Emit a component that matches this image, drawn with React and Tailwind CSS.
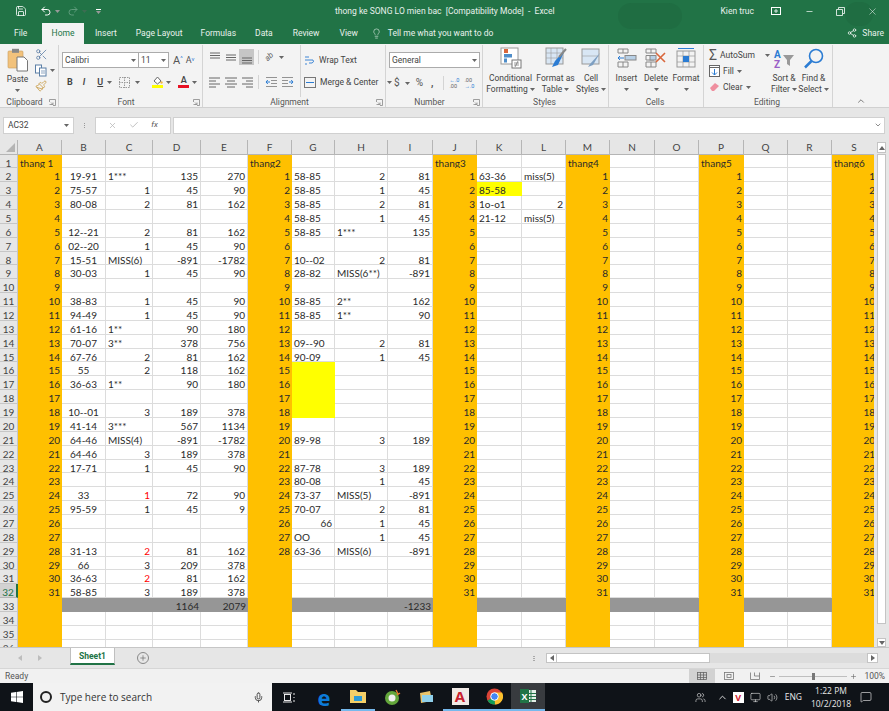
import React from 'react';
import { Undo2, Redo2, Save, Scissors, Paintbrush, ChevronDown, ChevronUp, Lightbulb, Share2, Minus, Plus, X, Check, Mic, Monitor, Volume2, MessageSquare, Users } from 'lucide-react';

const COLS = ['A','B','C','D','E','F','G','H','I','J','K','L','M','N','O','P','Q','R','S'];
const ORANGE = ['A','F','J','M','P','S'];

const jan = [
  ['19-91','1***',135,270],['75-57',1,45,90],['80-08',2,81,162],[],['12--21',2,81,162],['02--20',1,45,90],
  ['15-51','MISS(6)',-891,-1782],['30-03',1,45,90],[],['38-83',1,45,90],['94-49',1,45,90],['61-16','1**',90,180],
  ['70-07','3**',378,756],['67-76',2,81,162],['55',2,118,162],['36-63','1**',90,180],[],['10--01',3,189,378],
  ['41-14','3***',567,1134],['64-46','MISS(4)',-891,-1782],['64-46',3,189,378],['17-71',1,45,90],[],['33',1,72,90],
  ['95-59',1,45,9],[],[],['31-13',2,81,162],['66',3,209,378],['36-63',2,81,162],['58-85',3,189,378],
];
const feb = [
  ['58-85',2,81],['58-85',1,45],['58-85',2,81],['58-85',1,45],['58-85','1***',135],[],['10--02',2,81],['28-82','MISS(6**)',-891],
  [],['58-85','2**',162],['58-85','1**',90],[],['09--90',2,81],['90-09',1,45],[],[],[],[],[],['89-98',3,189],[],
  ['87-78',3,189],['80-08',1,45],['73-37','MISS(5)',-891],['70-07',2,81],[66,1,45],['OO',1,45],['63-36','MISS(6)',-891],
];
const mar = [['63-36','miss(5)'],['85-58'],['1o-o1',2],['21-12','miss(5)']];

const sheet = {};
const put = (col, row, v) => { if (v !== undefined) sheet[col + row] = v; };
jan.forEach((r, i) => r.forEach((v, k) => put(['B','C','D','E'][k], i + 2, v)));
feb.forEach((r, i) => r.forEach((v, k) => put(['G','H','I'][k], i + 2, v)));
mar.forEach((r, i) => r.forEach((v, k) => put(['K','L'][k], i + 2, v)));
['A','F','J','M','P','S'].forEach((c) => {
  const last = c === 'F' ? 28 : 31;
  for (let n = 1; n <= last; n++) put(c, n + 1, n);
});
put('A', 1, 'thang 1'); put('F', 1, 'thang2'); put('J', 1, 'thang3'); put('M', 1, 'thang4'); put('P', 1, 'thang5'); put('S', 1, 'thang6');
put('D', 33, 1164); put('E', 33, 2079); put('I', 33, -1233);

const RED = ['C25', 'C29', 'C31'];
const YELLOW = ['G16', 'G17', 'G18', 'G19', 'K3'];

function Cell({ col, row }) {
  const id = col + row;
  const v = sheet[id];
  const isNum = typeof v === 'number';
  const align = col === 'B' ? 'text-center' : isNum ? 'text-right' : 'text-left';
  let bg = 'bg-white border-r border-b border-[#dcdcdc]';
  if (YELLOW.includes(id)) bg = 'bg-[#ffff00]';
  else if (ORANGE.includes(col)) bg = 'bg-[#ffc000]';
  else if (row === 33) bg = 'bg-[#969696]';
  const color = RED.includes(id) ? 'text-[#ff0000]' : 'text-[#2a2a2a]';
  return <div className={`${bg} ${align} ${color} overflow-visible whitespace-nowrap px-[2px] pt-[1px] text-[10px] leading-[14px]`}>{v}</div>;
}

function Sheet() {
  const rows = Array.from({ length: 36 }, (_, i) => i + 1);
  return (
    <div className="grid min-w-0 flex-1 grid-cols-[18px_44px_44px_47px_48px_47px_44px_43px_53px_45px_44px_45px_44px_44px_45px_44px_45px_44px_44px_45px] grid-rows-[14.6px] auto-rows-[13.87px] overflow-hidden font-['Lato',sans-serif]">
      <div className="flex items-end justify-end border-r border-b border-[#b5b5b5] bg-[#e6e6e6] p-[2px]">
        <svg width="9" height="9" viewBox="0 0 9 9"><path d="M9 0V9H0Z" fill="#b4b4b4" /></svg>
      </div>
      {COLS.map((c) => (
        <div key={c} className="border-r border-b border-[#b5b5b5] bg-[#e6e6e6] text-center text-[10px] leading-[14px] text-[#444444]">{c}</div>
      ))}
      {rows.map((r) => (
        <React.Fragment key={r}>
          {r === 32 ? (
            <div className="border-r-2 border-b border-[#217346] border-b-[#b5b5b5] bg-[#d2d2d2] pt-[1px] text-center text-[10px] leading-[14px] text-[#217346]">{r}</div>
          ) : (
            <div className="border-r border-b border-[#c6c6c6] bg-[#e6e6e6] pt-[1px] text-center text-[10px] leading-[14px] text-[#444444]">{r}</div>
          )}
          {COLS.map((c) => <Cell key={c} col={c} row={r} />)}
        </React.Fragment>
      ))}
    </div>
  );
}

function VScroll() {
  return (
    <div className="flex w-[15px] flex-none flex-col bg-[#e6e6e6] pl-[3px] pr-[3px] pt-[2px]">
      <div className="flex h-[11px] flex-none items-center justify-center border border-[#c4c4c4] bg-white">
        <svg width="6" height="4" viewBox="0 0 6 4"><path d="M0 4L3 0L6 4Z" fill="#666" /></svg>
      </div>
      <div className="mt-px h-[470px] flex-none border border-[#c4c4c4] bg-white" />
      <div className="flex-1" />
      <div className="flex h-[9px] flex-none items-center justify-center border border-[#c4c4c4] bg-white">
        <svg width="6" height="4" viewBox="0 0 6 4"><path d="M0 0L3 4L6 0Z" fill="#666" /></svg>
      </div>
    </div>
  );
}

function Caret({ className = '' }) {
  return <svg className={`inline-block flex-none ${className}`} width="5" height="3" viewBox="0 0 5 3"><path d="M0 0H5L2.5 3Z" fill="#666" /></svg>;
}

function Launcher() {
  return (
    <svg className="flex-none" width="7" height="7" viewBox="0 0 7 7" fill="none" stroke="#888"><path d="M.5 3V.5H6.5V6.5H4M.5 5.5H2.5M2 3.5L4 5.5M4 3.5V5.5H2" strokeWidth=".8" /></svg>
  );
}

function Group({ w, label, launcher, children }) {
  return (
    <div className={`${w} flex h-full flex-none flex-col border-r border-[#d4d4d4]`}>
      <div className="flex min-h-0 flex-1">{children}</div>
      <div className="flex h-[10px] flex-none items-center justify-center pr-[2px] text-[8.5px] text-[#555555]">
        <span className="flex-1 text-center">{label}</span>
        {launcher && <Launcher />}
      </div>
    </div>
  );
}

function BigBtn({ w, icon, lines }) {
  return (
    <div className={`${w} flex flex-none flex-col items-center pt-[1px] text-[8.5px] leading-[11px] text-[#444444]`}>
      <div className="flex h-[24px] flex-none items-center justify-center">{icon}</div>
      <div className="mt-[3px] whitespace-nowrap">{lines[0]}</div>
      <div className="flex h-[11px] items-center gap-[2px] whitespace-nowrap">{lines[1]}<Caret /></div>
    </div>
  );
}

function IconPaste() {
  return (
    <svg className="flex-none" width="22" height="24" viewBox="0 0 22 24">
      <rect x="1" y="3" width="15" height="17" rx="1" fill="#f2c27c" stroke="#c79c5c" strokeWidth=".6" />
      <rect x="5" y="0.8" width="7" height="4" fill="#888" />
      <path d="M10 9H17L20.5 12.5V23H10Z" fill="#fff" stroke="#777" />
    </svg>
  );
}

function AlignLines({ kind }) {
  const paths = {
    left: 'M1 3H12M1 6H8M1 9H12M1 12H8',
    center: 'M1 3H13M3 6H11M1 9H13M3 12H11',
    right: 'M2 3H13M6 6H13M2 9H13M6 12H13',
    top: 'M2 3H12M2 5.5H12M2 8H12',
    middle: 'M2 5H12M2 7.5H12M2 10H12',
    bottom: 'M2 8H12M2 10.5H12M2 13H12',
  };
  return <svg width="14" height="15" viewBox="0 0 14 15" fill="none" stroke="#666" strokeWidth="1"><path d={paths[kind]} /></svg>;
}

function IndentIcon({ flip }) {
  return (
    <svg className={flip ? '-scale-x-100' : ''} width="13" height="13" viewBox="0 0 13 13" fill="none" stroke="#888">
      <path d="M1 1.5H12M6 4.5H12M6 7.5H12M1 10.5H12" strokeWidth=".9" />
      <path d="M5 6H1M2.8 4L1 6L2.8 8" stroke="#2b7cd3" />
    </svg>
  );
}

function Ribbon() {
  return (
    <div className="flex h-[64px] flex-none border-b border-[#d0d0d0] bg-[#f3f3f3] pt-[1px] font-['Roboto',sans-serif]">
      <Group w="w-[59px]" label="Clipboard" launcher>
        <div className="flex w-[35px] flex-none flex-col items-center pt-[3px] text-[8.5px] leading-[11px] text-[#444444]">
          <IconPaste />
          <div className="mt-[2px]">Paste</div>
          <Caret className="mt-[4px]" />
        </div>
        <div className="flex flex-col gap-[3px] pt-[3px]">
          <Scissors size={13} strokeWidth={1.3} className="text-[#4a6f9c]" />
          <div className="flex items-center gap-[3px]">
            <svg width="12" height="13" viewBox="0 0 12 13" fill="none" stroke="#5b7fa6"><rect x=".5" y="1" width="6" height="8" fill="#fff" /><rect x="4.5" y="4" width="6.5" height="8" fill="#fff" /><path d="M6 7H10M6 9H10" strokeWidth=".7" /></svg>
            <Caret />
          </div>
          <Paintbrush size={12} strokeWidth={1.4} className="text-[#c28f2e]" />
        </div>
      </Group>

      <Group w="w-[144px]" label="Font" launcher>
        <div className="flex flex-col gap-[8px] pl-[3px] pt-[7px]">
          <div className="flex items-center">
            <div className="flex h-[16px] w-[77px] items-center justify-between border border-[#ababab] bg-white px-[2px] text-[8.5px] text-[#444444]">Calibri<Caret /></div>
            <div className="flex h-[16px] w-[30px] items-center justify-between border border-l-0 border-[#ababab] bg-white px-[2px] text-[8.5px] text-[#444444]">11<Caret /></div>
            <div className="ml-[4px] text-[11px] leading-none text-[#555555]">A<span className="align-top text-[6px] text-[#2b7cd3]">^</span></div>
            <div className="ml-[3px] text-[9px] leading-none text-[#555555]">A<span className="align-top text-[6px] text-[#2b7cd3]">v</span></div>
          </div>
          <div className="flex items-center text-[9px] leading-none text-[#444444]">
            <span className="ml-[5px] font-bold">B</span>
            <span className="ml-[10px] italic font-semibold">I</span>
            <span className="ml-[12px] font-semibold underline">U</span>
            <Caret className="ml-[4px]" />
            <svg className="ml-[7px]" width="11" height="11" viewBox="0 0 11 11" fill="none" stroke="#999" strokeDasharray="1.5 1"><rect x=".5" y=".5" width="10" height="10" /><path d="M5.5 0V11M0 5.5H11" /></svg>
            <Caret className="ml-[5px]" />
            <div className="ml-[12px] flex w-[11px] flex-col items-center">
              <svg width="11" height="9" viewBox="0 0 11 9"><path d="M2 5L5.5 1L9 5L5.5 8Z" fill="#fff" stroke="#666" /><circle cx="9.5" cy="6.5" r="1.2" fill="#f1b64f" /></svg>
              <div className="h-[3px] w-[11px] bg-[#ffff00]" />
            </div>
            <Caret className="ml-[3px]" />
            <div className="ml-[7px] flex w-[11px] flex-col items-center">
              <span className="text-[9px] font-semibold leading-[9px]">A</span>
              <div className="h-[3px] w-[11px] bg-[#e81123]" />
            </div>
            <Caret className="ml-[3px]" />
          </div>
        </div>
      </Group>

      <Group w="w-[183px]" label="Alignment" launcher>
        <div className="flex flex-col gap-[9px] pl-[4px] pt-[4px]">
          <div className="flex items-center gap-[1px]">
            <div className="flex h-[16px] w-[15px] items-center justify-center"><AlignLines kind="top" /></div>
            <div className="flex h-[16px] w-[15px] items-center justify-center"><AlignLines kind="middle" /></div>
            <div className="flex h-[16px] w-[15px] items-center justify-center bg-[#c6c6c6]"><AlignLines kind="bottom" /></div>
            <div className="ml-[3px] h-[14px] border-l border-[#d4d4d4]" />
            <div className="ml-[5px] -rotate-45 text-[8px] italic leading-none text-[#666666]">ab</div>
            <Caret className="ml-[4px]" />
          </div>
          <div className="flex items-center gap-[1px]">
            <div className="flex h-[16px] w-[15px] items-center justify-center"><AlignLines kind="left" /></div>
            <div className="flex h-[16px] w-[15px] items-center justify-center"><AlignLines kind="center" /></div>
            <div className="flex h-[16px] w-[15px] items-center justify-center"><AlignLines kind="right" /></div>
            <div className="ml-[3px] h-[14px] border-l border-[#d4d4d4]" />
            <div className="ml-[4px] flex h-[16px] w-[15px] items-center justify-center"><IndentIcon /></div>
            <div className="flex h-[16px] w-[15px] items-center justify-center"><IndentIcon flip /></div>
          </div>
        </div>
        <div className="ml-[5px] flex flex-col gap-[7px] border-l border-[#d4d4d4] pl-[3px] pt-[8px] text-[8.5px] leading-[15px] text-[#444444]">
          <div className="flex items-center gap-[4px] whitespace-nowrap">
            <svg width="11" height="13" viewBox="0 0 11 13" fill="none" stroke="#2b7cd3" strokeWidth=".9"><path d="M1 3H5M1 6H9Q10.5 8 8 9H5M1 10H3" /></svg>
            Wrap Text
          </div>
          <div className="flex items-center gap-[4px] whitespace-nowrap">
            <svg className="flex-none" width="12" height="11" viewBox="0 0 12 11" fill="none" stroke="#777"><rect x=".5" y=".5" width="11" height="10" /><path d="M2 5.5H10" stroke="#2b7cd3" /></svg>
            Merge &amp; Center
            <Caret className="ml-[5px]" />
          </div>
        </div>
      </Group>

      <Group w="w-[97px]" label="Number" launcher>
        <div className="flex flex-col gap-[8px] pl-[3px] pt-[7px]">
          <div className="flex h-[16px] w-[91px] items-center justify-between border border-[#ababab] bg-white px-[2px] text-[8.5px] text-[#444444]">General<Caret /></div>
          <div className="flex items-center whitespace-nowrap text-[10px] leading-none text-[#555555]">
            <span className="ml-[5px]">$</span>
            <Caret className="ml-[5px]" />
            <span className="ml-[6px]">%</span>
            <span className="ml-[8px] font-bold">,</span>
            <div className="ml-[10px] h-[14px] border-l border-[#d4d4d4]" />
            <span className="ml-[5px] w-[11px] text-[5.5px] leading-[6px] text-[#2b7cd3]">←.0<br /><span className="text-[#666666]">.00</span></span>
            <span className="ml-[4px] w-[11px] text-[5.5px] leading-[6px] text-[#666666]">.00<br /><span className="text-[#2b7cd3]">→.0</span></span>
          </div>
        </div>
      </Group>

      <Group w="w-[126px]" label="Styles">
        <div className="w-[3px] flex-none" />
        <BigBtn w="w-[49px]" lines={['Conditional', 'Formatting']} icon={
          <svg width="22" height="22" viewBox="0 0 22 22"><rect x="1" y="1" width="17" height="16" fill="#fff" stroke="#9a9a9a" /><rect x="4" y="2" width="4" height="4" fill="#d9663b" /><rect x="4" y="7" width="8" height="3.5" fill="#4f8dc9" /><rect x="4" y="11.5" width="3" height="4" fill="#4f8dc9" /><rect x="12" y="13" width="9" height="8" fill="#fff" stroke="#777" /><path d="M14 16H19M14 18H19M15 20L18 14" stroke="#555" strokeWidth=".6" /></svg>
        } />
        <BigBtn w="w-[41px]" lines={['Format as', 'Table']} icon={
          <svg width="22" height="22" viewBox="0 0 22 22"><rect x="1" y="1" width="17" height="16" fill="#d8e6f4" stroke="#9a9a9a" /><path d="M1 6H18M1 11H18M6 1V17M12 1V17" stroke="#9a9a9a" strokeWidth=".6" /><path d="M20 3L10 14L7 20L13 18Z" fill="#2b7cd3" /><path d="M21 2L14 10" stroke="#888" strokeWidth="2" /></svg>
        } />
        <BigBtn w="w-[30px]" lines={['Cell', 'Styles']} icon={
          <svg width="20" height="20" viewBox="0 0 20 20"><rect x="1" y="1" width="17" height="15" fill="#d8e6f4" stroke="#9a9a9a" /><path d="M1 8H18" stroke="#9a9a9a" strokeWidth=".6" /><path d="M19 5L9 16L7 19L12 17Z" fill="#7d9fc2" /></svg>
        } />
      </Group>

      <Group w="w-[95px]" label="Cells">
        <div className="w-[3px] flex-none" />
        <BigBtn w="w-[29px]" lines={['Insert', '']} icon={
          <svg width="20" height="20" viewBox="0 0 20 20" fill="none" stroke="#888"><path d="M1 1H11V5H1ZM1 14H11V19H1ZM6 1V5M6 14V19" /><rect x="8" y="7.5" width="11" height="4.5" fill="#b8d0e6" /><path d="M7 10H1M3 8L1 10L3 12" stroke="#2b7cd3" /></svg>
        } />
        <BigBtn w="w-[30px]" lines={['Delete', '']} icon={
          <svg width="22" height="20" viewBox="0 0 22 20" fill="none" stroke="#888"><path d="M1 1H11V5H1ZM1 14H11V19H1ZM6 1V5M6 14V19M1 7.5H9V12H1Z" /><rect x="5" y="7.5" width="6" height="4.5" fill="#b8d0e6" /><path d="M11 5L20 14M20 5L11 14" stroke="#d9663b" strokeWidth="1.6" /></svg>
        } />
        <BigBtn w="w-[30px]" lines={['Format', '']} icon={
          <svg width="20" height="22" viewBox="0 0 20 22" fill="none" stroke="#999"><rect x="1" y="4" width="18" height="16" /><path d="M7 4V20M13 4V20M1 9H19M1 15H19" strokeWidth=".7" /><rect x="7" y="9" width="6" height="6" fill="#2b7cd3" stroke="none" /><path d="M2 1.5H18" stroke="#2b7cd3" /></svg>
        } />
      </Group>

      <Group w="w-[129px]" label="Editing">
        <div className="flex w-[65px] flex-none flex-col pl-[5px] pt-[2px] text-[8.5px] leading-[16px] text-[#444444]">
          <div className="flex items-center gap-[3px]"><span className="w-[11px] text-center text-[14px] leading-[16px] text-[#555555]">Σ</span>AutoSum<Caret className="ml-[7px]" /></div>
          <div className="flex items-center gap-[3px]">
            <svg width="11" height="12" viewBox="0 0 11 12" fill="none" stroke="#666"><rect x=".5" y=".5" width="10" height="11" fill="#fff" /><path d="M.5 2.5H10.5" /><path d="M5.5 4V10M3 7.5L5.5 10L8 7.5" stroke="#2b7cd3" /></svg>
            Fill<Caret />
          </div>
          <div className="flex items-center gap-[3px]">
            <svg width="11" height="10" viewBox="0 0 11 10"><path d="M1 6L6 1L10 4L5 9H3Z" fill="#ef8f9f" /></svg>
            Clear<Caret />
          </div>
        </div>
        <div className="flex w-[30px] flex-none flex-col items-center text-[8.5px] leading-[11px] text-[#444444]">
          <svg className="mb-[4px] mt-[4px] flex-none" width="22" height="20" viewBox="0 0 22 20"><text x="1" y="9" fontSize="10" fontWeight="700" fill="#2b7cd3">A</text><text x="1" y="19" fontSize="10" fontWeight="700" fill="#9a5fc6">Z</text><path d="M10 6H21L17 11V17L14 15V11Z" fill="#999" /></svg>
          <div>Sort &amp;</div>
          <div className="flex items-center gap-[2px]">Filter<Caret /></div>
        </div>
        <div className="flex w-[29px] flex-none flex-col items-center text-[8.5px] leading-[11px] text-[#444444]">
          <svg className="mb-[4px] mt-[3px] flex-none" width="21" height="21" viewBox="0 0 21 21" fill="none" stroke="#2b7cd3"><circle cx="13" cy="8" r="6.5" strokeWidth="1.6" /><path d="M8.5 13L2 19.5" strokeWidth="2.5" /></svg>
          <div>Find &amp;</div>
          <div className="flex items-center gap-[2px]">Select<Caret /></div>
        </div>
      </Group>

      <div className="flex flex-1 items-end justify-center pb-[1px]">
        <ChevronUp size={10} className="text-[#666666]" />
      </div>
    </div>
  );
}

function TitleBar() {
  return (
    <div className="relative flex h-[22px] flex-none items-center bg-[#217346] text-white font-['Roboto',sans-serif]">
      <div className="absolute left-[618px] top-[3px] h-[26px] w-[64px] rounded-full bg-[#1f6d42]" />
      <div className="absolute left-[845px] top-[2px] h-[24px] w-[28px] rounded-full bg-[#1f6d42]" />
      <div className="flex w-[335px] flex-none items-center pl-[15px]">
        <Save size={12} strokeWidth={1.6} />
        <Undo2 size={12} className="ml-[13px]" />
        <Caret className="ml-[3px] invert" />
        <Redo2 size={12} className="ml-[7px] text-[#5f9c7c]" />
        <Caret className="ml-[3px] opacity-40" />
        <div className="ml-[9px] flex flex-col items-center gap-[1px]">
          <div className="h-px w-[5px] bg-white" />
          <Caret className="invert" />
        </div>
      </div>
      <div className="relative text-[8.5px] whitespace-nowrap text-[#e8f1ec]">thong ke SONG LO mien bac&nbsp; [Compatibility Mode]&nbsp; -&nbsp; Excel</div>
      <div className="relative ml-auto flex items-center pr-[11px] text-[#e8f1ec]">
        <span className="mr-[17px] text-[8.5px]">Kien truc</span>
        <svg className="mr-[24px]" width="10" height="8" viewBox="0 0 10 8" fill="none" stroke="#fff"><rect x=".5" y=".5" width="9" height="7" /><path d="M5 2V6M3 4H7" strokeWidth=".8" /></svg>
        <Minus size={9} className="mr-[22px]" />
        <svg className="mr-[22px]" width="9" height="9" viewBox="0 0 9 9" fill="none" stroke="#fff"><path d="M2.5 2V.5H8.5V6.5H7M.5 2.5H6.5V8.5H.5Z" strokeWidth=".8" /></svg>
        <X size={11} strokeWidth={1.2} />
      </div>
    </div>
  );
}

function TabRow() {
  const item = 'text-[8.5px] text-[#e8f1ec] whitespace-nowrap';
  return (
    <div className="flex h-[22px] flex-none items-center bg-[#217346] font-['Roboto',sans-serif]">
      <span className={`${item} ml-[14px] w-[12px]`}>File</span>
      <div className="ml-[16px] flex h-[21px] w-[42px] items-center justify-center self-end bg-[#f3f3f3] text-[8.5px] text-[#217346]">Home</div>
      <span className={`${item} ml-[11px]`}>Insert</span>
      <span className={`${item} ml-[19px]`}>Page Layout</span>
      <span className={`${item} ml-[18px]`}>Formulas</span>
      <span className={`${item} ml-[19px]`}>Data</span>
      <span className={`${item} ml-[20px]`}>Review</span>
      <span className={`${item} ml-[20px]`}>View</span>
      <Lightbulb size={11} strokeWidth={1.3} className="ml-[13px] text-[#e8f1ec]" />
      <span className={`${item} ml-[6px]`}>Tell me what you want to do</span>
      <div className="ml-auto flex items-center gap-[5px] pr-[5px] text-[8.5px] text-[#e8f1ec]">
        <Share2 size={10} />
        Share
      </div>
    </div>
  );
}

function FormulaBar() {
  return (
    <div className="flex h-[32px] flex-none items-center bg-[#e6e6e6] pl-[3px] pr-[4px] pb-[6px] pt-[8px] font-['Roboto',sans-serif]">
      <div className="flex h-[17px] w-[71px] flex-none items-center justify-between border border-[#d0d0d0] bg-white px-[4px] text-[8.5px] text-[#444444]">AC32<Caret /></div>
      <div className="flex w-[21px] flex-none flex-col items-center gap-[1px]">
        <div className="h-px w-px bg-[#999999]" /><div className="h-px w-px bg-[#999999]" /><div className="h-px w-px bg-[#999999]" />
      </div>
      <div className="flex h-[17px] w-[76px] flex-none items-center justify-around border border-[#d0d0d0] bg-white px-[6px]">
        <X size={9} className="text-[#b5b5b5]" />
        <Check size={10} className="text-[#b5b5b5]" />
        <span className="text-[8px] italic text-[#555555]">fx</span>
      </div>
      <div className="ml-[2px] flex h-[17px] flex-1 items-center justify-end border border-[#d0d0d0] bg-white pr-[2px]">
        <ChevronDown size={8} className="text-[#555555]" />
      </div>
    </div>
  );
}

function SheetTabs() {
  return (
    <div className="flex h-[20px] flex-none items-center bg-[#e6e6e6] font-['Roboto',sans-serif]">
      <svg className="ml-[18px]" width="4" height="6" viewBox="0 0 4 6"><path d="M4 0L0 3L4 6Z" fill="#bdbdbd" /></svg>
      <svg className="ml-[16px]" width="4" height="6" viewBox="0 0 4 6"><path d="M0 0L4 3L0 6Z" fill="#bdbdbd" /></svg>
      <div className="ml-[28px] flex h-[17px] w-[45px] items-start justify-center self-start border-x border-b-2 border-[#bfbfbf] border-b-[#217346] bg-white text-[8.5px] font-bold leading-[16px] text-[#217346]">Sheet1</div>
      <div className="ml-[22px] flex h-[12px] w-[12px] items-center justify-center rounded-full border border-[#888888]">
        <Plus size={8} className="text-[#666666]" />
      </div>
      <div className="ml-[384px] flex flex-col gap-[1px]">
        <div className="h-px w-[2px] bg-[#a8a8a8]" /><div className="h-px w-[2px] bg-[#a8a8a8]" /><div className="h-px w-[2px] bg-[#a8a8a8]" />
      </div>
      <div className="ml-[11px] flex h-[10px] w-[332px] flex-none items-stretch">
        <div className="flex w-[11px] items-center justify-center border border-[#c4c4c4] bg-white">
          <svg width="4" height="6" viewBox="0 0 4 6"><path d="M4 0L0 3L4 6Z" fill="#666" /></svg>
        </div>
        <div className="w-[153px] border-y border-r border-[#c4c4c4] bg-white" />
        <div className="flex-1 bg-[#dcdcdc]" />
        <div className="flex w-[11px] items-center justify-center border border-[#c4c4c4] bg-white">
          <svg width="4" height="6" viewBox="0 0 4 6"><path d="M0 0L4 3L0 6Z" fill="#666" /></svg>
        </div>
      </div>
    </div>
  );
}

function StatusBar() {
  return (
    <div className="flex h-[15px] flex-none items-center border-t border-[#d6d6d6] bg-[#f1f1f1] pl-[5px] text-[8.5px] text-[#555555] font-['Roboto',sans-serif]">
      <span>Ready</span>
      <div className="ml-auto flex h-full w-[26px] items-center justify-center bg-[#d2d2d2]">
        <svg width="10" height="8" viewBox="0 0 10 8" fill="none" stroke="#666" strokeWidth=".8"><rect x=".5" y=".5" width="9" height="7" /><path d="M3.5 0V8M6.5 0V8M0 3H10M0 5.5H10" /></svg>
      </div>
      <svg className="ml-[9px]" width="10" height="8" viewBox="0 0 10 8" fill="none" stroke="#777" strokeWidth=".8"><rect x=".5" y=".5" width="9" height="7" /><rect x="3" y="2.5" width="4" height="3" /></svg>
      <svg className="ml-[16px]" width="10" height="8" viewBox="0 0 10 8" fill="none" stroke="#777" strokeWidth=".8"><path d="M.5 .5V7.5H9.5V.5M4.5 .5V4H9.5" /></svg>
      <Minus size={7} className="ml-[9px] text-[#666666]" />
      <div className="relative ml-[3px] flex h-[7px] w-[68px] items-center">
        <div className="h-px w-full bg-[#bfbfbf]" />
        <div className="absolute left-[33px] h-[7px] w-[3px] bg-[#777777]" />
      </div>
      <Plus size={7} className="ml-[3px] text-[#666666]" />
      <span className="ml-[7px] mr-[4px]">100%</span>
    </div>
  );
}

function Taskbar() {
  const pin = 'flex h-full w-[34px] flex-none items-center justify-center';
  const on = 'border-b-2 border-[#76b9ed]';
  return (
    <div className="flex h-[28px] flex-none items-center bg-[#0f1318] font-['Open_Sans',sans-serif]">
      <div className="flex h-full w-[33px] flex-none items-center justify-center">
        <svg width="12" height="12" viewBox="0 0 12 12" fill="#fff"><path d="M0 1.7L5 1V5.7H0ZM5.6 .9L12 0V5.7H5.6ZM0 6.3H5V11L0 10.3ZM5.6 6.3H12V12L5.6 11.1Z" /></svg>
      </div>
      <div className="flex h-full w-[239px] flex-none items-center bg-[#f2f2f2] pl-[7px] text-[10px] text-[#333333]">
        <div className="h-[12px] w-[12px] rounded-full border-2 border-[#222222]" />
        <span className="ml-[8px]">Type here to search</span>
        <Mic size={11} className="ml-auto mr-[8px] text-[#444444]" />
      </div>
      <div className="flex h-full w-[34px] flex-none items-center justify-center">
        <svg width="12" height="11" viewBox="0 0 12 11" fill="none" stroke="#fff" strokeWidth=".9"><rect x="1.5" y="2.5" width="6" height="6" /><path d="M0 1H9M0 10H9M11 1V3M11 5V6M11 8V10" /></svg>
      </div>
      <div className="w-[1px] flex-none" />
      <div className={pin}><span className="text-[22px] font-bold leading-none text-[#0c7bd8]">e</span></div>
      <div className={`${pin} ${on}`}>
        <svg width="16" height="14" viewBox="0 0 16 14"><path d="M0 1H6L8 3H16V14H0Z" fill="#f4cf67" /><rect x="4" y="7" width="8" height="5" fill="#2c9bd6" /></svg>
      </div>
      <div className={pin}>
        <svg width="17" height="17" viewBox="0 0 17 17"><circle cx="8" cy="9" r="7" fill="#63a63b" /><circle cx="8" cy="9" r="3.5" fill="#f0f0f0" /><path d="M12 1L14 5M16 4L13 6" stroke="#e87c2e" strokeWidth="1.4" /></svg>
      </div>
      <div className={pin}>
        <svg width="16" height="15" viewBox="0 0 16 15"><path d="M2 3L12 1L14 11L3 13Z" fill="#e9c46a" /><rect x="4" y="5" width="11" height="7" fill="#8fd0ea" /></svg>
      </div>
      <div className={`${pin} ${on}`}>
        <div className="flex h-[17px] w-[17px] items-center justify-center bg-[#f0e9e5] text-[15px] font-bold leading-none text-[#c8202e]">A</div>
      </div>
      <div className={`${pin} ${on}`}>
        <svg width="17" height="17" viewBox="0 0 17 17"><circle cx="8.5" cy="8.5" r="8" fill="#db4437" /><path d="M8.5 8.5L1.5 12.5A8 8 0 0 0 9 16.5Z" fill="#0f9d58" /><path d="M8.5 4.5H16A8 8 0 0 1 9 16.5Z" fill="#fbc02d" /><circle cx="8.5" cy="8.5" r="3.8" fill="#4285f4" stroke="#fff" /></svg>
      </div>
      <div className={`${pin} ${on} bg-[#383b3f]`}>
        <svg width="16" height="14" viewBox="0 0 16 14"><rect x="6" y="1" width="10" height="12" fill="#e4efe8" /><path d="M6 4.5H16M6 7.5H16M6 10.5H16M11 1V13" stroke="#217346" /><rect x="0" y="0" width="9" height="14" fill="#217346" /><text x="1.5" y="10.5" fontSize="9" fontWeight="700" fill="#fff">X</text></svg>
      </div>
      <div className="ml-auto flex items-center text-[#e8e8e8]">
        <Users size={11} strokeWidth={1.3} />
        <ChevronUp size={11} className="ml-[11px]" />
        <div className="ml-[5px] flex h-[11px] w-[11px] items-center justify-center bg-white text-[9px] font-bold leading-none text-[#d3202e]">V</div>
        <Monitor size={11} strokeWidth={1.3} className="ml-[6px]" />
        <Volume2 size={11} strokeWidth={1.3} className="ml-[6px]" />
        <span className="ml-[7px] text-[8.5px]">ENG</span>
        <div className="ml-[9px] flex w-[40px] flex-col items-center text-[8.5px] leading-[13px]">
          <span>1:22 PM</span>
          <span>10/2/2018</span>
        </div>
        <MessageSquare size={12} strokeWidth={1.3} className="ml-[9px] mr-[17px]" />
      </div>
    </div>
  );
}

export default function App() {
  return (
    <div className="flex h-[711px] w-[889px] flex-col overflow-hidden bg-white">
      <TitleBar />
      <TabRow />
      <Ribbon />
      <FormulaBar />
      <div className="flex h-[508px] flex-none overflow-hidden border-b border-[#c6c6c6]">
        <Sheet />
        <VScroll />
      </div>
      <SheetTabs />
      <StatusBar />
      <Taskbar />
    </div>
  );
}
